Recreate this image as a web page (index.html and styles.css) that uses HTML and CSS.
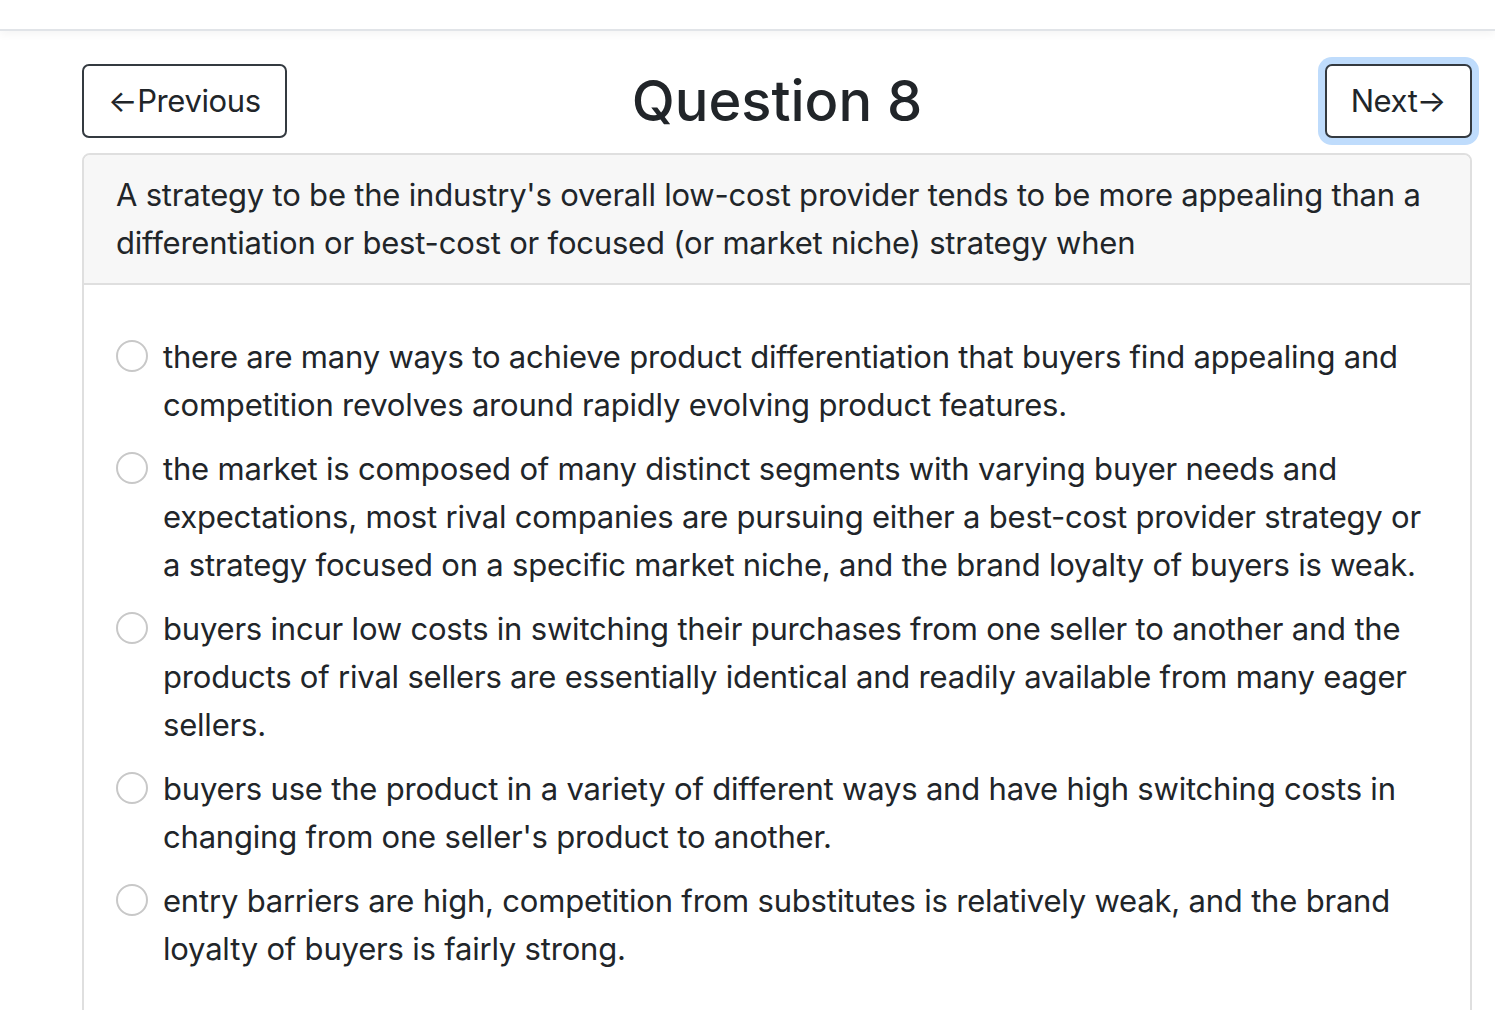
FILE: index.html
```html
<!DOCTYPE html>
<html>
<head>
<meta charset="utf-8">
<link rel="stylesheet" href="styles.css">
</head>
<body>
<div class="topbar"></div>
<main class="page">
  <div class="nav-row">
    <button class="btn btn-prev">←Previous</button>
    <h3 class="title">Question 8</h3>
    <button class="btn btn-next">Next→</button>
  </div>
  <section class="card">
    <div class="card-header">A strategy to be the industry's overall low-cost provider tends to be more appealing than a differentiation or best-cost or focused (or market niche) strategy when</div>
    <div class="card-body">
      <label class="option"><span class="radio"></span><span class="opt-text">there are many ways to achieve product differentiation that buyers find appealing and competition revolves around rapidly evolving product features.</span></label>
      <label class="option"><span class="radio"></span><span class="opt-text">the market is composed of many distinct segments with varying buyer needs and expectations, most rival companies are pursuing either a best-cost provider strategy or a strategy focused on a specific market niche, and the brand loyalty of buyers is weak.</span></label>
      <label class="option"><span class="radio"></span><span class="opt-text">buyers incur low costs in switching their purchases from one seller to another and the products of rival sellers are essentially identical and readily available from many eager sellers.</span></label>
      <label class="option"><span class="radio"></span><span class="opt-text">buyers use the product in a variety of different ways and have high switching costs in changing from one seller's product to another.</span></label>
      <label class="option"><span class="radio"></span><span class="opt-text">entry barriers are high, competition from substitutes is relatively weak, and the brand loyalty of buyers is fairly strong.</span></label>
    </div>
  </section>
</main>
</body>
</html>
```
FILE: styles.css
```css
html, body {
  margin: 0;
  padding: 0;
  background: #fff;
  overflow: hidden;
}
body {
  font-family: Inter, "Noto Sans", "Liberation Sans", sans-serif;
  color: #212529;
  font-size: 31px;
  line-height: 48px;
  letter-spacing: -0.2px;
}
.topbar {
  height: 29px;
  border-bottom: 2px solid #e1e4e8;
  box-shadow: 0 4px 8px rgba(0, 0, 0, 0.04);
}
.page {
  width: 1390px;
  margin-left: 82px;
  padding-top: 33px;
}
.nav-row {
  display: grid;
  grid-template-columns: 1fr auto 1fr;
  align-items: center;
  height: 74px;
  margin-bottom: 15px;
}
.btn {
  font-family: inherit;
  font-size: 31px;
  letter-spacing: -0.4px;
  line-height: 48px;
  height: 74px;
  box-sizing: border-box;
  color: #212529;
  background: #fff;
  border: 2px solid #343a40;
  border-radius: 7px;
  padding: 11px 24px;
  margin: 0;
}
.btn-prev {
  justify-self: start;
}
.btn-next {
  justify-self: end;
  box-shadow: 0 0 0 7px #bfdcfc;
}
.title {
  margin: 0;
  font-size: 56px;
  font-weight: 500;
  line-height: 66px;
  letter-spacing: 0;
}
.card {
  border: 2px solid #dfdfdf;
  border-radius: 8px;
  height: 900px;
}
.card-header {
  background: #f7f7f7;
  border-bottom: 2px solid #dfdfdf;
  border-radius: 6px 6px 0 0;
  padding: 16px 40px 16px 32px;
}
.card-body {
  padding: 48px 40px 0 32px;
  display: flex;
  flex-direction: column;
  gap: 16px;
}
.option {
  display: flex;
  align-items: flex-start;
}
.radio {
  flex: none;
  width: 28px;
  height: 28px;
  border: 2px solid #c8c8c8;
  border-radius: 50%;
  margin-top: 7px;
  margin-right: 15px;
}
.opt-text {
  flex: 1;
}
```
